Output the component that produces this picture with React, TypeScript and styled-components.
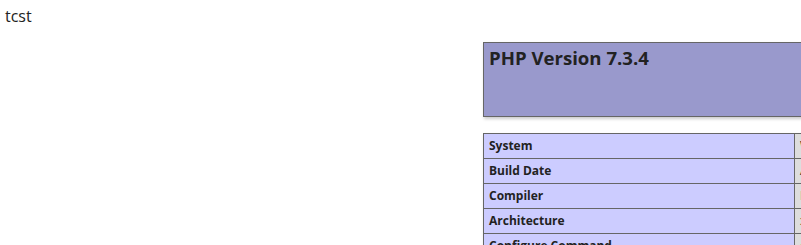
import React from 'react';
import styled, { createGlobalStyle } from 'styled-components';

const infoRows = [
  { name: 'System', value: 'Windows NT DESKTOP-PC 10.0 build 17763 (Windows 10) AMD64' },
  { name: 'Build Date', value: 'Apr 2 2019 21:50:57' },
  { name: 'Compiler', value: 'MSVC15 (Visual C++ 2017)' },
  { name: 'Architecture', value: 'x64' },
  { name: 'Configure Command', value: 'cscript /nologo configure.js "--enable-snapshot-build" "--enable-debug-pack"' },
  { name: 'Server API', value: 'Apache 2.0 Handler' },
];

const GlobalStyle = createGlobalStyle`
  html, body {
    margin: 0;
    padding: 0;
    background: #fff;
    overflow: hidden;
  }
  body {
    color: #222;
    font-family: 'Open Sans', 'Noto Sans', sans-serif;
  }
`;

const Page = styled.div`
  width: 801px;
  height: 245px;
  overflow: hidden;
`;

const Echo = styled.div`
  padding: 5px 0 0 5px;
  font-size: 16px;
  line-height: 22px;
  height: 22px;
`;

const Center = styled.div`
  padding-left: 483px;
  padding-top: 15px;
`;

const InfoTable = styled.table`
  border-collapse: collapse;
  border: 0;
  width: 934px;
  box-shadow: 1px 2px 3px #ccc;
  margin-bottom: 16px;
  table-layout: fixed;
`;

const Cell = styled.td<{ kind: 'h' | 'e' | 'v' }>`
  border: 1px solid #666;
  font-size: 12px;
  line-height: 16px;
  padding: 4px 5px;
  vertical-align: baseline;
  white-space: nowrap;
  overflow: hidden;
  background-color: ${p => (p.kind === 'h' ? '#99c' : p.kind === 'e' ? '#ccf' : '#ddd')};
  font-weight: ${p => (p.kind === 'v' ? 'normal' : 'bold')};
  width: ${p => (p.kind === 'e' ? '300px' : 'auto')};
`;

const HeaderCell = styled(Cell)`
  height: 65px;
  vertical-align: top;
`;

const Title = styled.h1`
  margin: 0;
  font-size: 18.6px;
  line-height: 22px;
  font-weight: bold;
  text-align: left;
`;

const App: React.FC = () => (
  <Page>
    <GlobalStyle />
    <Echo>tcst</Echo>
    <Center>
      <InfoTable>
        <tbody>
          <tr>
            <HeaderCell kind="h">
              <Title>PHP Version 7.3.4</Title>
            </HeaderCell>
          </tr>
        </tbody>
      </InfoTable>
      <InfoTable>
        <tbody>
          {infoRows.map(row => (
            <tr key={row.name}>
              <Cell kind="e">{row.name}</Cell>
              <Cell kind="v">{row.value}</Cell>
            </tr>
          ))}
        </tbody>
      </InfoTable>
    </Center>
  </Page>
);

export default App;
